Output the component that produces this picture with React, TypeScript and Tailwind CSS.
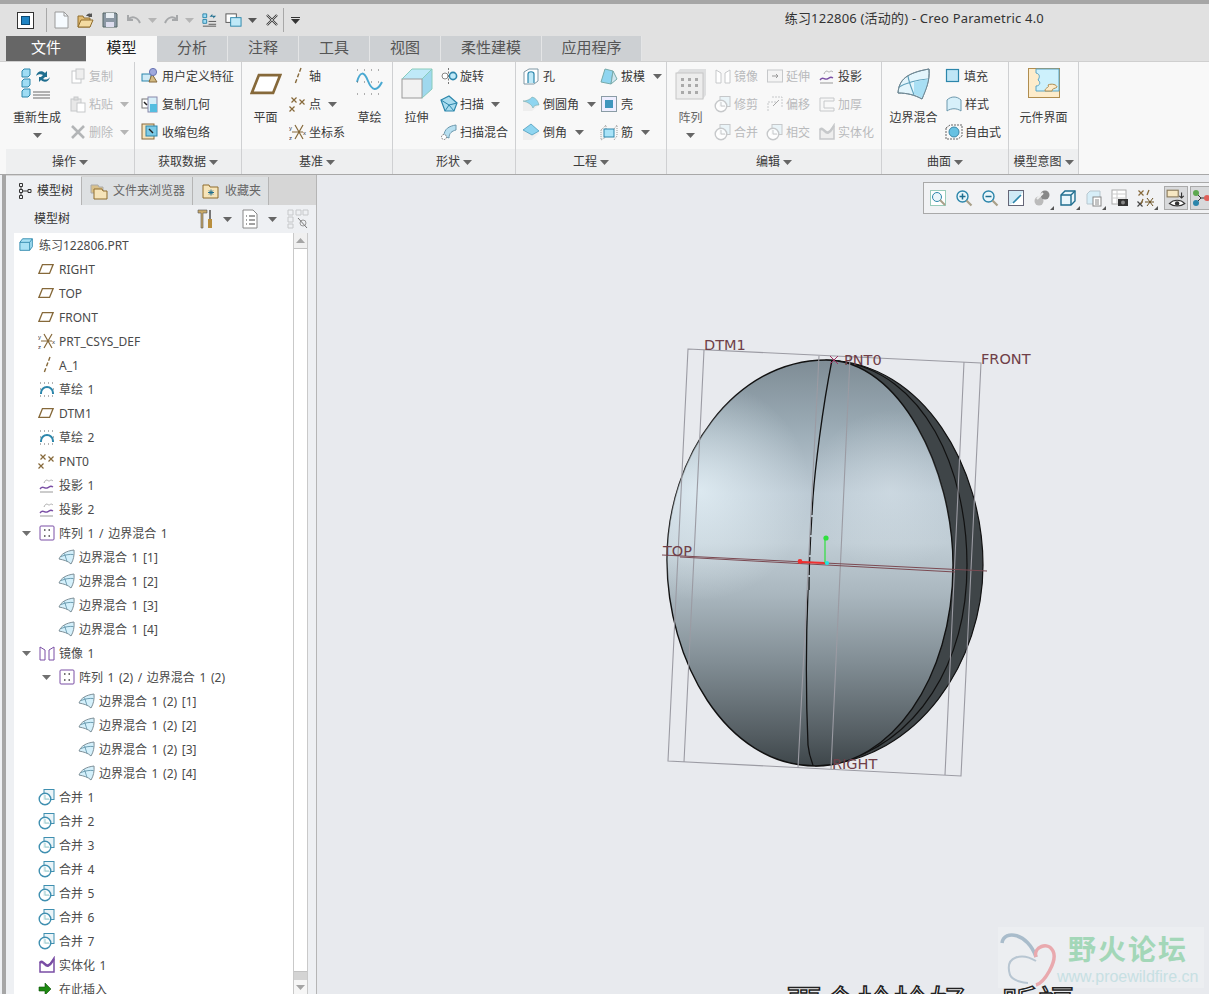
import React from "react";

const FONT = "font-['Noto_Sans','Noto_Sans_CJK_SC',sans-serif]";
const BR = "#86693a";
const BL = "#2c86ab";
const LB = "#bfe9f8";
const PU = "#7a4ea5";
const GR = "#c6c8ca";

type P = { children: React.ReactNode; s?: number; v?: number };
const S = ({ children, s = 18, v = 18 }: P) => (
  <svg width={s} height={s} viewBox={`0 0 ${v} ${v}`} fill="none" className="shrink-0">
    {children}
  </svg>
);

const Caret = ({ c = "#666" }: { c?: string }) => (
  <svg width="9" height="5" viewBox="0 0 9 5" className="shrink-0">
    <path d="M0 0h9L4.5 5z" fill={c} />
  </svg>
);

const X = ({ x, y, c = BR }: { x: number; y: number; c?: string }) => (
  <path d={`M${x - 2.5} ${y - 2.5}l5 5m0-5l-5 5`} stroke={c} strokeWidth="1.2" />
);

const Plane = ({ s = 16 }: { s?: number }) => (
  <S s={s}>
    <path d="M5 4h12l-4 10H1z" stroke={BR} strokeWidth="1.5" fill="#fff" />
  </S>
);
const Axis = () => (
  <S>
    <path d="M12 1L6 17" stroke={BR} strokeWidth="1.4" strokeDasharray="4 2" />
  </S>
);
const Point = () => (
  <S>
    <X x={5} y={5} />
    <X x={13} y={7} />
    <X x={3} y={14} />
  </S>
);
const Csys = () => (
  <S>
    <path d="M6 2l8 14M14 2L6 16M3 9h11" stroke={BR} strokeWidth="1.2" />
    <text x="0" y="7" fontSize="6" fill="#333" fontFamily="Liberation Sans">y</text>
    <text x="0" y="17" fontSize="6" fill="#333" fontFamily="Liberation Sans">z</text>
    <text x="14" y="12" fontSize="6" fill="#333" fontFamily="Liberation Sans">x</text>
  </S>
);
const Sketch = () => (
  <S>
    <path d="M3 14V13a6 6 0 0 1 12 0v1" stroke={BL} strokeWidth="2" />
    <path d="M2 3h14M2 16h14M2 9h1M15 9h1" stroke="#666" strokeDasharray="1 3" />
  </S>
);
const Project = ({ off }: { off?: boolean }) => (
  <S>
    <path d="M6 7c2-5 4-2 5-2s2-2 4 0" stroke={off ? GR : "#aaa"} />
    <path d="M2 13c3-4 4 0 7-1s3-3 6-1" stroke={off ? GR : PU} strokeWidth="1.4" />
    <path d="M2 16h13" stroke={off ? GR : "#999"} />
  </S>
);
const Boundary = ({ s = 18 }: { s?: number }) => (
  <S s={s}>
    <path d="M1 11C3 6 8 3 16 2c.5 5-.5 10-3 14-3-3-7-4-12-5z" fill="#d4f0fb" stroke="#7d8f98" />
    <path d="M6.5 5.5c1 3.5 2 6 2.5 8M3 8.5c4-1.5 8-2.5 12.5-2" stroke="#6f9fb3" />
  </S>
);
const Pattern = () => (
  <S>
    <rect x="2" y="2" width="14" height="14" rx="1" fill="#fff" stroke={PU} />
    <path d="M6 6h1.5M10.5 6H12M6 12h1.5M10.5 12H12" stroke="#444" strokeWidth="1.6" />
  </S>
);
const Mirror = ({ off }: { off?: boolean }) => (
  <S>
    <path d="M2 3l5 3v10H2zM16 3l-5 3v10h5z" stroke={off ? GR : PU} fill="#fff" />
  </S>
);
const Merge = ({ off }: { off?: boolean }) => {
  const a = off ? GR : "#3f8fb0";
  return (
    <S>
      <rect x="6" y="1.5" width="10" height="10" fill="#eaf4f8" stroke={a} />
      <circle cx="7" cy="11" r="5.8" fill="#fff" fillOpacity=".8" stroke={a} strokeWidth="1.4" />
      <path d="M7 7v4h4" stroke={off ? GR : "#9cc"} />
    </S>
  );
};
const Solidify = ({ off }: { off?: boolean }) => (
  <S>
    <path d="M2 16V6c3-3 5 4 8 3s4-4 6-7v14z" fill={off ? "#eee" : "#fff"} stroke={off ? GR : PU} strokeWidth="1.5" />
    <path d="M2 7c3-3 5 4 8 3s4-4 6-7" stroke={off ? GR : PU} strokeWidth="2" />
  </S>
);
const Part = () => (
  <S s={16}>
    <path d="M1 6l3-4h11v9l-3 4H1z" fill="#a8e1f5" stroke={BL} />
    <path d="M1 6h11v9M12 6l3-4" stroke={BL} />
  </S>
);
const Insert = () => (
  <S s={14} v={14}>
    <path d="M1 5h6V1l6 6-6 6V9H1z" fill="#1e8a12" stroke="#0b4e06" strokeWidth=".6" />
  </S>
);
const Doc = ({ off }: { off?: boolean }) => (
  <S>
    <rect x="3" y="4" width="9" height="12" fill="#fff" stroke={off ? GR : "#888"} />
    <rect x="7" y="2" width="8" height="10" fill={off ? "#eee" : "#ddd"} stroke={off ? GR : "#888"} />
  </S>
);
const Clip = () => (
  <S>
    <rect x="2" y="4" width="10" height="12" fill="#e8e8e8" stroke={GR} />
    <rect x="5" y="2" width="4" height="3" fill="#ddd" stroke={GR} />
    <rect x="8" y="8" width="8" height="9" fill="#fff" stroke={GR} />
  </S>
);
const Del = () => (
  <S>
    <path d="M3 3l12 12M15 3L3 15" stroke="#b3b5b7" strokeWidth="2.6" />
  </S>
);
const UDF = () => (
  <S>
    <rect x="1" y="7" width="9" height="7" fill="#cfeaf6" stroke={BL} />
    <path d="M11 7l-3 8h8z" fill="#d3ba82" stroke={BR} />
    <circle cx="12" cy="5" r="3.6" fill="#9fa9dd" stroke="#6b75b3" />
  </S>
);
const CopyGeom = () => (
  <S>
    <rect x="1" y="4" width="9" height="9" fill="#fff" stroke="#777" />
    <rect x="7" y="2" width="9" height="15" fill="#d7eef8" stroke="#88a" />
    <rect x="9" y="9" width="7" height="8" fill="#55bde0" />
    <path d="M3 7l3 3" stroke="#222" strokeWidth="1.5" />
  </S>
);
const Shrink = () => (
  <S>
    <rect x="1" y="1" width="12" height="15" fill="#f6e3bb" stroke={BR} />
    <rect x="5" y="3" width="11" height="10" fill="#7ccae6" stroke={BL} />
    <path d="M8 6l4 4" stroke="#222" strokeWidth="1.5" />
  </S>
);
const Revolve = () => (
  <S>
    <circle cx="5" cy="9" r="3" stroke="#888" fill="#fff" />
    <circle cx="13" cy="9" r="3.6" stroke={BL} strokeWidth="1.6" fill={LB} />
    <path d="M8.5 1v16" stroke="#777" strokeDasharray="2 1.5" />
  </S>
);
const Sweep = () => (
  <S>
    <path d="M1 5l8-4 8 7-3 8H5z" fill="#a9dcef" stroke={BL} strokeWidth="1.2" />
    <path d="M1 5l8 5 8-2M9 10l-4 6M9 10l5 6" stroke={BL} />
  </S>
);
const SweepBlend = () => (
  <S>
    <path d="M4 13C4 6 9 3 16 2v5c-4 1-7 3-7 8z" fill="#b7dff0" stroke="#6d98ad" />
    <circle cx="4" cy="14" r="2.5" stroke="#777" fill="#fff" strokeDasharray="1.5 1" />
  </S>
);
const Hole = () => (
  <S>
    <path d="M2 5l5-3h9v12l-4 3H2z" fill="#fff" stroke="#7f98a5" />
    <path d="M6 16V7c0-3 6-3 6 0v9" fill="#bfe9f8" stroke={BL} strokeWidth="1.2" />
  </S>
);
const Round = () => (
  <S>
    <path d="M1 7l9-5c4 1 6 4 7 8l-7 6H1z" fill="#eee" />
    <path d="M1 6c4 0 8-2 9-4 4 1 6 4 7 8-2 0-5 0-6 3-1-3-5-6-10-7z" fill="#8fd5f0" stroke="#7aa" strokeWidth=".6" />
  </S>
);
const Chamfer = () => (
  <S>
    <path d="M1 8l8-6 8 8-7 7H1z" fill="#eee" />
    <path d="M1 7l8-6 8 7-7 4z" fill="#8fd5f0" stroke={BL} strokeWidth=".6" />
  </S>
);
const Draft = () => (
  <S>
    <path d="M1 15l4-13 8 2-2 13z" fill="#8fd5f0" stroke="#7aa" />
    <path d="M11 17l2-13 4 8z" fill="#cfe6ef" stroke="#7aa" />
  </S>
);
const Shell = () => (
  <S>
    <rect x="1.5" y="1.5" width="15" height="15" fill="#eef" stroke="#8a9ca5" />
    <rect x="5" y="5" width="8" height="8" fill="#3f96bd" />
  </S>
);
const Rib = () => (
  <S>
    <path d="M1 7l5-5v12l-5 3z" fill="#f5f5f5" stroke="#999" strokeDasharray="1 1" />
    <rect x="4" y="6" width="10" height="8" fill="#a9e3f8" stroke={BL} />
    <path d="M14 6l3-4v11l-3 4" stroke="#999" strokeDasharray="1 1" />
  </S>
);
const Extend = () => (
  <S>
    <rect x="1.5" y="3" width="15" height="12" fill="#f4f4f4" stroke={GR} />
    <path d="M6 9h6m-2-2l2 2-2 2" stroke="#999" />
  </S>
);
const Offset = () => (
  <S>
    <path d="M2 16V7h9M6 2h10v10" stroke={GR} strokeDasharray="2 1" />
    <path d="M7 11l6-6" stroke="#aaa" />
  </S>
);
const Thicken = () => (
  <S>
    <path d="M2 3h14v3H6v7h10v3H2z" fill="#f7f7f7" stroke={GR} />
  </S>
);
const Fill = () => (
  <S s={16} v={16}>
    <rect x="1.5" y="1.5" width="12" height="12" fill="#bfe6f6" stroke={BL} strokeWidth="1.2" />
  </S>
);
const Style = () => (
  <S>
    <path d="M2 16V5c4-4 10-4 14 0v11c-4-3-10-3-14 0z" fill="#d7f0fa" stroke="#6d98ad" />
  </S>
);
const Freeform = () => (
  <S>
    <path d="M1 5l4-3h12v11l-4 3H1z" stroke="#666" strokeDasharray="2 1" />
    <circle cx="9" cy="9" r="5" fill="#67c1e2" stroke="#3b87a8" />
  </S>
);

const Regen = () => (
  <svg width="32" height="32" viewBox="0 0 32 32" fill="none">
    {[1, 11, 21].map((y) => (
      <path key={y} d={`M1 ${y + 2}l2-2h6v6l-2 2H1z`} fill="#9edcf4" stroke={BL} />
    ))}
    <path d="M12 24h17M12 27h17M12 30h17" stroke="#999" strokeWidth="1.4" />
    <path d="M15 8c1-5 6-6 9-3l2-2v6h-6l2-2c-2-1-5-1-7 1z" fill="#1f6e8f" />
    <path d="M29 9c-1 5-6 6-9 3l-2 2V9h6l-2 2c2 1 5 1 7-2z" fill="#1f6e8f" />
  </svg>
);
const BigSketch = () => (
  <svg width="28" height="28" viewBox="0 0 28 28" fill="none">
    <path d="M1 14c3-11 7-11 11-1s9 11 14 1" stroke="#4aa9d2" strokeWidth="2" />
    <path d="M1 2h26M1 14h26M1 26h26" stroke="#666" strokeDasharray="1 6" />
  </svg>
);
const Extrude = () => (
  <svg width="32" height="32" viewBox="0 0 32 32" fill="none">
    <path d="M1 11L11 1h20L21 11z" fill="#bfe9f8" />
    <path d="M21 11L31 1v20L21 30z" fill="#9fd8ee" />
    <rect x="1" y="11" width="20" height="19" fill="#f2f2f2" stroke="#9a9a9a" />
    <path d="M1 11L11 1h20v20L21 30M21 11L31 1" stroke="#8cb" />
  </svg>
);
const BigPattern = () => (
  <svg width="32" height="32" viewBox="0 0 32 32" fill="none">
    <path d="M1 6l4-5h26v26l-3 4z" fill="#dedfe0" />
    <rect x="1" y="5" width="27" height="26" fill="#ededed" stroke="#c6c6c6" />
    {[10, 16, 23].map((y) =>
      [6, 13, 20].map((x) => <rect key={`${x}${y}`} x={x} y={y} width="3" height="3" fill="#aaa" />),
    )}
  </svg>
);
const BigBoundary = () => (
  <svg width="34" height="32" viewBox="0 0 34 32" fill="none">
    <path d="M1 25C2 12 9 5 32 1c1 12-3 20-7 30-7-4-15-6-24-6z" fill="#e3f5fc" stroke="#6f8894" />
    <path d="M11 8c1 7 4 13 6 19M2 19c9-5 18-7 29-8" stroke="#5d9fba" strokeWidth="1.2" />
    <path d="M17 14l14-3c0 6-3 14-6 19l-8-4z" fill="#a9dff4" />
    <path d="M1 25C2 12 9 5 32 1c1 12-3 20-7 30-7-4-15-6-24-6z" stroke="#6f8894" />
  </svg>
);
const Puzzle = () => (
  <svg width="32" height="32" viewBox="0 0 32 32" fill="none">
    <rect x="0.5" y="0.5" width="31" height="29" fill="#fdeccb" stroke="#b08d4f" />
    <path d="M8 1h23v22H8v-5c4 0 5-4 2-6 2-3 2-6-2-7z" fill="#cdf1fc" stroke="#5ba4c4" />
    <path d="M17 23c0-4 5-3 3-6 4-2 9 0 9 2-2 2-5 1-5 4z" fill="#fdeccb" stroke="#b08d4f" />
  </svg>
);

const Big = ({
  cls,
  icon,
  label,
  arrow,
  off,
}: {
  cls: string;
  icon: React.ReactNode;
  label: string;
  arrow?: boolean;
  off?: boolean;
}) => (
  <div className={`${cls} flex flex-col items-center shrink-0`}>
    <div className="h-[44px] pt-[6px] flex items-start justify-center">{icon}</div>
    <div className={`h-[24px] leading-[24px] text-xs whitespace-nowrap ${off ? "text-[#666]" : "text-[#3a3a3a]"}`}>{label}</div>
    {arrow && (
      <div className="pt-[3px]">
        <Caret />
      </div>
    )}
  </div>
);

const Small = ({
  icon,
  label,
  arrow,
  off,
  gap = "gap-[2px]",
}: {
  icon: React.ReactNode;
  label: string;
  arrow?: boolean;
  off?: boolean;
  gap?: string;
}) => (
  <div className={`h-[28px] flex items-center ${gap}`}>
    {icon}
    <span className={`text-xs pt-[2px] whitespace-nowrap ${off ? "text-[#b8babc]" : "text-[#3a3a3a]"}`}>{label}</span>
    {arrow && (
      <span className="ml-[5px]">
        <Caret c={off ? "#b5b5b5" : "#666"} />
      </span>
    )}
  </div>
);

const Group = ({ cls, name, children }: { cls: string; name: string; children: React.ReactNode }) => (
  <div className={`${cls} flex flex-col border-r border-[#cfd0d2] shrink-0`}>
    <div className="h-[87px] flex">{children}</div>
    <div className="h-[25px] bg-[#eeeff0] flex items-center justify-center gap-[3px] text-xs text-[#3a3a3a] pt-[1px]">
      {name}
      <Caret />
    </div>
  </div>
);

const TABS: [string, string][] = [
  ["分析", "w-[71px]"],
  ["注释", "w-[71px]"],
  ["工具", "w-[71px]"],
  ["视图", "w-[71px]"],
  ["柔性建模", "w-[101px]"],
  ["应用程序", "w-[100px]"],
];

type RowT = { l: number; icon: React.ReactNode; t: string; open?: boolean };
const PL = ["pl-[5px]", "pl-[4px]", "pl-[24px]", "pl-[44px]"];
const rows: RowT[] = [
  { l: 0, icon: <Part />, t: "练习122806.PRT" },
  { l: 1, icon: <Plane />, t: "RIGHT" },
  { l: 1, icon: <Plane />, t: "TOP" },
  { l: 1, icon: <Plane />, t: "FRONT" },
  { l: 1, icon: <Csys />, t: "PRT_CSYS_DEF" },
  { l: 1, icon: <Axis />, t: "A_1" },
  { l: 1, icon: <Sketch />, t: "草绘 1" },
  { l: 1, icon: <Plane />, t: "DTM1" },
  { l: 1, icon: <Sketch />, t: "草绘 2" },
  { l: 1, icon: <Point />, t: "PNT0" },
  { l: 1, icon: <Project />, t: "投影 1" },
  { l: 1, icon: <Project />, t: "投影 2" },
  { l: 1, icon: <Pattern />, t: "阵列 1 / 边界混合 1", open: true },
  { l: 2, icon: <Boundary />, t: "边界混合 1 [1]" },
  { l: 2, icon: <Boundary />, t: "边界混合 1 [2]" },
  { l: 2, icon: <Boundary />, t: "边界混合 1 [3]" },
  { l: 2, icon: <Boundary />, t: "边界混合 1 [4]" },
  { l: 1, icon: <Mirror />, t: "镜像 1", open: true },
  { l: 2, icon: <Pattern />, t: "阵列 1 (2) / 边界混合 1 (2)", open: true },
  { l: 3, icon: <Boundary />, t: "边界混合 1 (2) [1]" },
  { l: 3, icon: <Boundary />, t: "边界混合 1 (2) [2]" },
  { l: 3, icon: <Boundary />, t: "边界混合 1 (2) [3]" },
  { l: 3, icon: <Boundary />, t: "边界混合 1 (2) [4]" },
  { l: 1, icon: <Merge />, t: "合并 1" },
  { l: 1, icon: <Merge />, t: "合并 2" },
  { l: 1, icon: <Merge />, t: "合并 3" },
  { l: 1, icon: <Merge />, t: "合并 4" },
  { l: 1, icon: <Merge />, t: "合并 5" },
  { l: 1, icon: <Merge />, t: "合并 6" },
  { l: 1, icon: <Merge />, t: "合并 7" },
  { l: 1, icon: <Solidify />, t: "实体化 1" },
  { l: 1, icon: <Insert />, t: "在此插入" },
];

const Row = ({ r }: { r: RowT }) => (
  <div className={`h-6 flex items-center shrink-0 ${PL[r.l]}`}>
    {r.l > 0 && (
      <span className="w-5 shrink-0 flex pl-[4px]">
        {r.open && <Caret c="#707070" />}
      </span>
    )}
    <span className="w-[21px] shrink-0 flex">{r.icon}</span>
    <span className={`text-xs pt-[2px] [word-spacing:1.5px] whitespace-nowrap text-[#4a4a4a] ${r.l === 0 ? "-ml-[1px]" : ""}`}>{r.t}</span>
  </div>
);

const Magnifier = ({ mark }: { mark?: string }) => (
  <S>
    <circle cx="7.5" cy="7.5" r="5.5" fill="#eaf6fb" stroke={BL} strokeWidth="1.4" />
    {mark && <path d={mark} stroke="#1f6e8f" strokeWidth="1.5" />}
    <path d="M11.5 11.5l5 5" stroke="#a9a089" strokeWidth="2.2" />
  </S>
);

const viewIcons: React.ReactNode[] = [
  <S key="0">
    <rect x="1.5" y="1.5" width="15" height="15" fill="#fff" stroke="#9cb" />
    <circle cx="8" cy="8" r="4.5" fill="#eaf6fb" stroke={BL} />
    <path d="M11 11l5 5" stroke="#a9a089" strokeWidth="2" />
  </S>,
  <Magnifier key="1" mark="M4.5 7.5h6M7.5 4.5v6" />,
  <Magnifier key="2" mark="M4.5 7.5h6" />,
  <S key="3">
    <rect x="1.5" y="1.5" width="15" height="15" fill="#cfeaf6" stroke="#667" />
    <path d="M2 16c3-1 5-3 14-13v13z" fill="#fff" />
    <path d="M6 14l8-8" stroke={BL} strokeWidth="1.6" />
  </S>,
  <S key="4">
    <circle cx="6" cy="12" r="4.5" fill="#bbb" />
    <circle cx="12" cy="6" r="4.5" fill="#888" />
    <path d="M4 10l6-6" stroke="#eee" strokeWidth="2" />
  </S>,
  <S key="5">
    <path d="M2 6l4-4h10v10l-4 4H2z" fill="#eaf6fb" stroke="#1f6e8f" strokeWidth="1.4" />
    <path d="M2 6h10v10M12 6l4-4" stroke="#1f6e8f" strokeWidth="1.4" />
  </S>,
  <S key="6">
    <path d="M2 5l3-3h10v13H2z" fill="#d7eef8" stroke="#b8c7cf" />
    <rect x="8" y="8" width="8" height="9" fill="#fff" stroke="#888" />
    <path d="M10 11h4M10 13h4M10 15h4" stroke="#888" />
  </S>,
  <S key="7">
    <rect x="1" y="1" width="14" height="14" fill="#fff" stroke="#aaa" />
    <path d="M1 5h14M1 9h14M6 1v14" stroke="#ccc" />
    <rect x="7" y="10" width="10" height="7" fill="#333" />
    <circle cx="12" cy="13.5" r="2" fill="#888" />
  </S>,
  <S key="8">
    <X x={4} y={4} />
    <X x={3} y={15} c="#444" />
    <path d="M12 1l-2 5M6 10l-2 5" stroke={BR} strokeWidth="1.3" />
    <path d="M10 9l6 8M16 9l-6 8M8 13h9" stroke="#6a5020" />
  </S>,
];

const BODY = "M826 360C900 360 953 470 953 565C953 680 890 766 816 766C725 766 667 660 667 560C667 455 735 360 826 360Z";

const Canvas3D = () => (
  <svg viewBox="317 175 892 819" width="892" height="819" className="absolute left-0 top-0" fill="none">
    <defs>
      <linearGradient id="body" x1="0" y1="360" x2="0" y2="766" gradientUnits="userSpaceOnUse">
        <stop offset="0" stopColor="#7e8c95" />
        <stop offset="0.15" stopColor="#98a8b2" />
        <stop offset="0.33" stopColor="#bccad4" />
        <stop offset="0.45" stopColor="#c0cdd5" />
        <stop offset="0.58" stopColor="#a9b6be" />
        <stop offset="0.75" stopColor="#808c93" />
        <stop offset="0.92" stopColor="#555e63" />
        <stop offset="1" stopColor="#3e464a" />
      </linearGradient>
      <radialGradient id="glow" cx="700" cy="490" r="110" gradientUnits="userSpaceOnUse">
        <stop offset="0" stopColor="#eaf6fc" stopOpacity=".7" />
        <stop offset="1" stopColor="#eaf6fc" stopOpacity="0" />
      </radialGradient>
      <radialGradient id="glow2" cx="890" cy="490" r="80" gradientUnits="userSpaceOnUse">
        <stop offset="0" stopColor="#e3edf3" stopOpacity=".4" />
        <stop offset="1" stopColor="#e3edf3" stopOpacity="0" />
      </radialGradient>
    </defs>
    <path d="M826 360C925 362 983 470 983 565C983 660 920 760 816 766Z" fill="#3f4548" stroke="#111" strokeWidth="1.2" />
    <path d="M838 361C925 372 967 470 967 565C967 660 920 745 830 765" stroke="#111" strokeWidth="1.2" />
    <path d={BODY} fill="url(#body)" stroke="#111" strokeWidth="1.4" />
    <path d={BODY} fill="url(#glow)" />
    <path d={BODY} fill="url(#glow2)" />
    <path d="M832 360C822 410 815 470 813 497" stroke="#111" strokeWidth="1.3" />
    <path d="M813 497C811 530 809 560 809 590" stroke="#111" strokeWidth="1.3" strokeDasharray="18 2" />
    <path d="M808 590C806 640 806 700 808 745C809 755 811 760 813 765" stroke="#111" strokeWidth="1.3" />
    <g stroke="#9b9ba3" strokeWidth="1.1">
      <path d="M688 349L981 363L961 776L668 761Z" />
      <path d="M704 350L684 762M964 362L945 775M819 356L798 768M850 357L831 769" />
    </g>
    <g stroke="#7b4a52" strokeWidth="1">
      <path d="M662 555L987 571" />
      <path d="M680 557L955 572" />
    </g>
    <path d="M800 562L825 563" stroke="#f03030" strokeWidth="2" />
    <path d="M825 563V538" stroke="#2fe03f" strokeWidth="1.2" />
    <circle cx="826" cy="538" r="2.6" fill="#2fe03f" />
    <circle cx="800" cy="561.5" r="2.4" fill="#f03030" />
    <circle cx="827" cy="563" r="2" fill="#22e6e6" />
    <path d="M830 356l8 8m0-8l-8 8" stroke="#a03060" />
    <g fill="#6f3f48" fontFamily="'DejaVu Sans',sans-serif" fontSize="14.5">
      <text x="704" y="350">DTM1</text>
      <text x="844" y="365">PNT0</text>
      <text x="981" y="364">FRONT</text>
      <text x="663" y="556">TOP</text>
      <text x="832" y="769">RIGHT</text>
    </g>
  </svg>
);

export default function App() {
  return (
    <div className={`${FONT} w-[1209px] h-[994px] overflow-hidden flex flex-col bg-[#e8eaee]`}>
      <div className="h-[4px] bg-[#a6a6a6] shrink-0" />
      {/* title / quick access */}
      <div className="h-[32px] bg-[#e1e1e1] flex items-center shrink-0 pl-[17px]">
        <div className="w-[17px] h-[17px] bg-white border border-[#333] flex items-center justify-center">
          <div className="w-[9px] h-[9px] bg-[#1f84c4] border border-[#0d4a73]" />
        </div>
        <div className="w-px h-[24px] bg-[#a8a8a8] ml-[12px]" />
        <div className="ml-[7px] flex items-center">
          <svg width="15" height="18" viewBox="0 0 15 18" fill="none">
            <path d="M1 1h9l4 4v12H1z" fill="#f6fbff" stroke="#9a9a9a" />
            <path d="M10 1v4h4" stroke="#9a9a9a" />
          </svg>
        </div>
        <div className="ml-[8px]">
          <svg width="17" height="17" viewBox="0 0 17 17" fill="none">
            <path d="M1 4h5l1 2h6v9H1z" fill="#e2bc72" stroke="#8f6c2c" />
            <path d="M1 15l3-7h12l-3 7z" fill="#f4dba1" stroke="#8f6c2c" />
            <path d="M9 4c1-2 3-3 5-2l1-1v4h-4l1-1c-1 0-2 0-3 0z" fill="#555" />
          </svg>
        </div>
        <div className="ml-[8px]">
          <svg width="16" height="16" viewBox="0 0 16 16" fill="none">
            <path d="M1 1h13l1 1v13H1z" fill="#8a97a3" stroke="#566" />
            <rect x="4" y="1" width="8" height="5" fill="#e8eef3" />
            <rect x="4" y="10" width="8" height="5" fill="#dde" />
          </svg>
        </div>
        <div className="ml-[8px]">
          <svg width="16" height="12" viewBox="0 0 16 12" fill="none">
            <path d="M2 1v5h5M2 6c3-4 9-4 12 3" stroke="#a6a8aa" strokeWidth="2" />
          </svg>
        </div>
        <div className="ml-[6px]">
          <Caret c="#b5b5b5" />
        </div>
        <div className="ml-[6px]">
          <svg width="16" height="12" viewBox="0 0 16 12" fill="none">
            <path d="M14 1v5H9M14 6C11 2 5 2 2 9" stroke="#a6a8aa" strokeWidth="2" />
          </svg>
        </div>
        <div className="ml-[6px]">
          <Caret c="#b5b5b5" />
        </div>
        <div className="ml-[7px]">
          <S s={17}>
            <path d="M2 2h4v4H2zM2 8h4v4H2z" fill="#9edcf4" stroke={BL} />
            <path d="M2 15h14M8 10h8M8 13h8" stroke="#555" />
            <path d="M9 5l3-3v2h4l-3 3V5z" fill="#1f6e8f" />
          </S>
        </div>
        <div className="ml-[7px]">
          <S s={17}>
            <rect x="1" y="2" width="11" height="9" fill="#fff" stroke="#555" />
            <rect x="6" y="6" width="11" height="9" fill="#bfe9f8" stroke={BL} />
          </S>
        </div>
        <div className="ml-[6px]">
          <Caret c="#555" />
        </div>
        <div className="ml-[9px]">
          <svg width="12" height="12" viewBox="0 0 12 12" fill="none">
            <path d="M1 1l10 10M11 1L1 11" stroke="#444" strokeWidth="2.4" />
            <path d="M1 1l10 10M11 1L1 11" stroke="#eee" strokeWidth=".7" />
          </svg>
        </div>
        <div className="w-px h-[24px] bg-[#a8a8a8] ml-[5px]" />
        <div className="ml-[7px] flex flex-col items-center gap-[1px]">
          <div className="w-[9px] h-px bg-[#333]" />
          <Caret c="#333" />
        </div>
        <div className="ml-auto pr-[165px] pb-[2px] text-[13px] tracking-[0.2px] text-[#333] whitespace-nowrap">练习122806 (活动的) - Creo Parametric 4.0</div>
      </div>
      {/* tabs */}
      <div className="h-[26px] bg-[#e1e1e1] flex items-start pl-[6px] shrink-0 text-[15px] border-b border-[#cfcfcf]">
        <div className="w-[80px] h-[25px] pb-[2px] bg-[#666666] text-white flex items-center justify-center">文件</div>
        <div className="w-[71px] h-[26px] pb-[3px] bg-[#f8f8f8] text-[#222] flex items-center justify-center">模型</div>
        {TABS.map(([t, w]) => (
          <div key={t} className={`${w} h-[25px] pb-[2px] bg-[#cdd0d3] text-[#555] border-r border-[#e4e5e6] flex items-center justify-center`}>
            {t}
          </div>
        ))}
      </div>
      {/* ribbon */}
      <div className="h-[113px] bg-[#f8f8f8] border-b border-[#a8a8a8] flex pl-[6px] shrink-0">
        <Group cls="w-[129px]" name="操作">
          <Big cls="w-[62px]" icon={<Regen />} label="重新生成" arrow />
          <div className="flex flex-col pl-[1px]">
            <Small off icon={<Doc off />} label="复制" />
            <Small off icon={<Clip />} label="粘贴" arrow />
            <Small off icon={<Del />} label="删除" arrow />
          </div>
        </Group>
        <Group cls="w-[107px]" name="获取数据">
          <div className="flex flex-col pl-[6px]">
            <Small gap="gap-[3px]" icon={<UDF />} label="用户定义特征" />
            <Small gap="gap-[3px]" icon={<CopyGeom />} label="复制几何" />
            <Small gap="gap-[3px]" icon={<Shrink />} label="收缩包络" />
          </div>
        </Group>
        <Group cls="w-[151px]" name="基准">
          <Big cls="w-[47px]" icon={<Plane s={32} />} label="平面" />
          <div className="flex flex-col w-[60px]">
            <Small icon={<Axis />} label="轴" />
            <Small icon={<Point />} label="点" arrow />
            <Small icon={<Csys />} label="坐标系" />
          </div>
          <Big cls="w-[41px]" icon={<BigSketch />} label="草绘" />
        </Group>
        <Group cls="w-[123px]" name="形状">
          <Big cls="w-[47px]" icon={<Extrude />} label="拉伸" />
          <div className="flex flex-col">
            <Small icon={<Revolve />} label="旋转" />
            <Small icon={<Sweep />} label="扫描" arrow />
            <Small icon={<SweepBlend />} label="扫描混合" />
          </div>
        </Group>
        <Group cls="w-[151px]" name="工程">
          <div className="flex flex-col w-[78px] pl-[6px]">
            <Small gap="gap-[3px]" icon={<Hole />} label="孔" />
            <Small gap="gap-[3px]" icon={<Round />} label="倒圆角" arrow />
            <Small gap="gap-[3px]" icon={<Chamfer />} label="倒角" arrow />
          </div>
          <div className="flex flex-col pl-[6px]">
            <Small gap="gap-[3px]" icon={<Draft />} label="拔模" arrow />
            <Small gap="gap-[3px]" icon={<Shell />} label="壳" />
            <Small gap="gap-[3px]" icon={<Rib />} label="筋" arrow />
          </div>
        </Group>
        <Group cls="w-[215px]" name="编辑">
          <Big cls="w-[47px]" icon={<BigPattern />} label="阵列" arrow off />
          <div className="flex flex-col w-[52px]">
            <Small off icon={<Mirror off />} label="镜像" />
            <Small off icon={<Merge off />} label="修剪" />
            <Small off icon={<Merge off />} label="合并" />
          </div>
          <div className="flex flex-col w-[52px]">
            <Small off icon={<Extend />} label="延伸" />
            <Small off icon={<Offset />} label="偏移" />
            <Small off icon={<Merge off />} label="相交" />
          </div>
          <div className="flex flex-col">
            <Small icon={<Project />} label="投影" />
            <Small off icon={<Thicken />} label="加厚" />
            <Small off icon={<Solidify off />} label="实体化" />
          </div>
        </Group>
        <Group cls="w-[127px]" name="曲面">
          <Big cls="w-[63px]" icon={<BigBoundary />} label="边界混合" />
          <div className="flex flex-col">
            <Small gap="gap-[3px]" icon={<Fill />} label="填充" />
            <Small icon={<Style />} label="样式" />
            <Small icon={<Freeform />} label="自由式" />
          </div>
        </Group>
        <Group cls="w-[70px]" name="模型意图">
          <Big cls="w-full" icon={<Puzzle />} label="元件界面" />
        </Group>
      </div>
      {/* main */}
      <div className="flex-1 flex min-h-0 bg-[#e8eaee]">
        {/* left panel */}
        <div className="w-[317px] shrink-0 bg-[#eef0f3] border-r border-[#b5b5b5] flex flex-col pl-[2px]">
          <div className="h-[30px] shrink-0 bg-[#d6d6d6] flex items-end border-l-4 border-[#a6a6a6] text-xs">
            <div className="w-[75px] h-[29px] bg-[#eef0f3] flex items-center gap-[5px] pl-[12px] text-[#333]">
              <svg width="14" height="18" viewBox="0 0 14 18" fill="none" className="shrink-0">
                <path d="M1.5 1.5h3v3h-3zM1.5 7.5h3v3h-3zM1.5 13.5h3v3h-3zM10 7.5h3v3h-3zM3 5v2M3 11v2M5 9h5" stroke="#333" />
              </svg>
              模型树
            </div>
            <div className="w-[112px] h-[28px] bg-[#dde0e2] border-l border-r border-[#b5b5b5] flex items-center gap-[5px] pl-[8px] text-[#666]">
              <S s={18}>
                <path d="M1 3h7l1 2h4v6H1z" fill="#d9c08a" stroke="#aaa" />
                <path d="M4 7h8l1 2h4v8H4z" fill="#f6e4b9" stroke="#8f6c2c" />
              </S>
              文件夹浏览器
            </div>
            <div className="w-[76px] h-[28px] bg-[#dde0e2] border-r border-[#b5b5b5] flex items-center gap-[5px] pl-[9px] text-[#666]">
              <S s={18}>
                <path d="M1 3h6l1 2h8v11H1z" fill="#f6e4b9" stroke="#8f6c2c" />
                <path d="M6 10.5h6M9 7.5v6M7 8.5l4 4m0-4l-4 4" stroke="#1f6e8f" />
              </S>
              收藏夹
            </div>
          </div>
          <div className="flex-1 flex flex-col min-h-0 border-l-4 border-[#a6a6a6]">
            <div className="h-[28px] shrink-0 flex items-center pl-[28px] text-xs text-[#333]">
              <span className="w-[163px]">模型树</span>
              <svg width="16" height="20" viewBox="0 0 16 20" fill="none" className="shrink-0">
                <path d="M1 1h9v3H6v15H4V4H1z" fill="#c8a868" stroke="#555" strokeWidth=".6" />
                <rect x="12" y="1" width="2" height="9" fill="#777" />
                <rect x="11" y="10" width="4" height="9" fill="#b98f3e" />
              </svg>
              <span className="ml-[10px]"><Caret /></span>
              <svg width="16" height="20" viewBox="0 0 16 20" fill="none" className="ml-[10px] shrink-0">
                <path d="M1 1h10l4 4v14H1z" fill="#fff" stroke="#888" />
                <path d="M4 7h1M7 7h6M4 11h1M7 11h6M4 15h1M7 15h6" stroke="#444" />
              </svg>
              <span className="ml-[10px]"><Caret /></span>
              <svg width="22" height="20" viewBox="0 0 22 20" fill="none" className="ml-[10px] shrink-0">
                <path d="M1 1h5v5H1zM1 8h5v5H1zM1 15h5v4H1zM9 1h5v5H9zM16 1h5v5h-5z" stroke="#c6c8ca" />
                <circle cx="16" cy="14" r="3" stroke="#999" />
                <path d="M11 9l9 10" stroke="#777" />
              </svg>
            </div>
            <div className="flex-1 min-h-0 flex ml-[8px] mr-[8px] overflow-hidden">
              <div className="flex-1 bg-white flex flex-col overflow-hidden">
                {rows.map((r) => (
                  <Row key={r.t} r={r} />
                ))}
              </div>
              <div className="w-[15px] shrink-0 bg-[#f0f0f0] border-l border-r border-[#c9c9c9] flex flex-col">
                <div className="h-[15px] shrink-0 flex items-center justify-center">
                  <svg width="9" height="5" viewBox="0 0 9 5"><path d="M0 5h9L4.5 0z" fill="#a5a5a5" /></svg>
                </div>
                <div className="h-[724px] shrink-0 bg-white border-t border-b border-[#c2c2c2]" />
                <div className="h-[8px] shrink-0 bg-[#d4d4d4]" />
                <div className="flex-1 flex items-center justify-center bg-[#f6f6f6]">
                  <Caret c="#a5a5a5" />
                </div>
              </div>
            </div>
          </div>
        </div>
        {/* canvas */}
        <div className="flex-1 relative overflow-hidden">
          <Canvas3D />
          <div className="absolute left-[606px] top-[7px] w-[290px] h-[32px] bg-[#f1f2f4] border border-[#a9a9a9] flex items-center pl-[1px]">
            {viewIcons.map((ic, i) => (
              <div key={i} className="w-[26px] h-[24px] flex items-center justify-center shrink-0 relative">
                {ic}
                {(i >= 4 && i !== 7) && <span className="absolute right-[1px] bottom-0 w-0 h-0 border-l-[4px] border-b-[4px] border-l-transparent border-b-[#555]" />}
              </div>
            ))}
            <div className="w-[24px] h-[24px] bg-[#d8d9db] border border-[#aaa] flex items-center justify-center shrink-0 ml-[5px]">
              <S s={20}>
                <rect x="1" y="2" width="10" height="6" fill="#f6e7c3" stroke="#8a7a5a" />
                <path d="M14 4v5m-2-2l2 2 2-2" stroke="#333" />
                <path d="M3 14c4-4 10-4 14 0-4 3-10 3-14 0z" fill="#fff" stroke="#333" />
                <circle cx="10" cy="14" r="2" fill="#333" />
              </S>
            </div>
            <div className="w-[24px] h-[24px] bg-[#d8d9db] border border-[#aaa] flex items-center justify-start shrink-0 ml-[2px] pl-[1px]">
              <S s={18}>
                <path d="M4 4l5 5-5 5M9 9h7" stroke="#333" />
                <circle cx="4" cy="4" r="3" fill="#5da84f" />
                <circle cx="4" cy="14" r="3" fill="#2c86ab" />
                <circle cx="15" cy="9" r="3" fill="#e0605a" />
              </S>
            </div>
          </div>
          {/* watermark */}
          <div className="absolute left-[681px] top-[752px] w-[206px] h-[61px] bg-white/20 overflow-hidden">
            <svg width="60" height="60" viewBox="0 0 60 60" fill="none" className="absolute left-0 top-0">
              <path d="M4 16C6 2 30 6 38 30" stroke="#a9bccb" strokeWidth="3.5" />
              <path d="M38 30C35 20 50 14 55 24S46 56 38 58" stroke="#e9a9ae" strokeWidth="3.5" />
              <path d="M38 34C25 26 6 28 12 48c3 6 14 8 18 8" stroke="#b8c6d2" strokeWidth="2" />
            </svg>
            <div className="absolute left-[70px] top-[3px] text-[28px] leading-[36px] font-bold tracking-[2px] text-[#a3d7b8] font-['Noto_Sans_CJK_SC',sans-serif] whitespace-nowrap">野火论坛</div>
            <div className="absolute left-[59px] top-[39px] text-base leading-[22px] text-[#c7e0e3] font-['Liberation_Sans',sans-serif] whitespace-nowrap">www.proewildfire.cn</div>
          </div>
          {/* caption */}
          <div className="absolute left-[469px] top-[804px] text-[36px] leading-[44px] text-white [-webkit-text-stroke:1.5px_#222] font-['Noto_Sans_CJK_SC',sans-serif] whitespace-pre">要会捡捡好　听福</div>
        </div>
      </div>
    </div>
  );
}
